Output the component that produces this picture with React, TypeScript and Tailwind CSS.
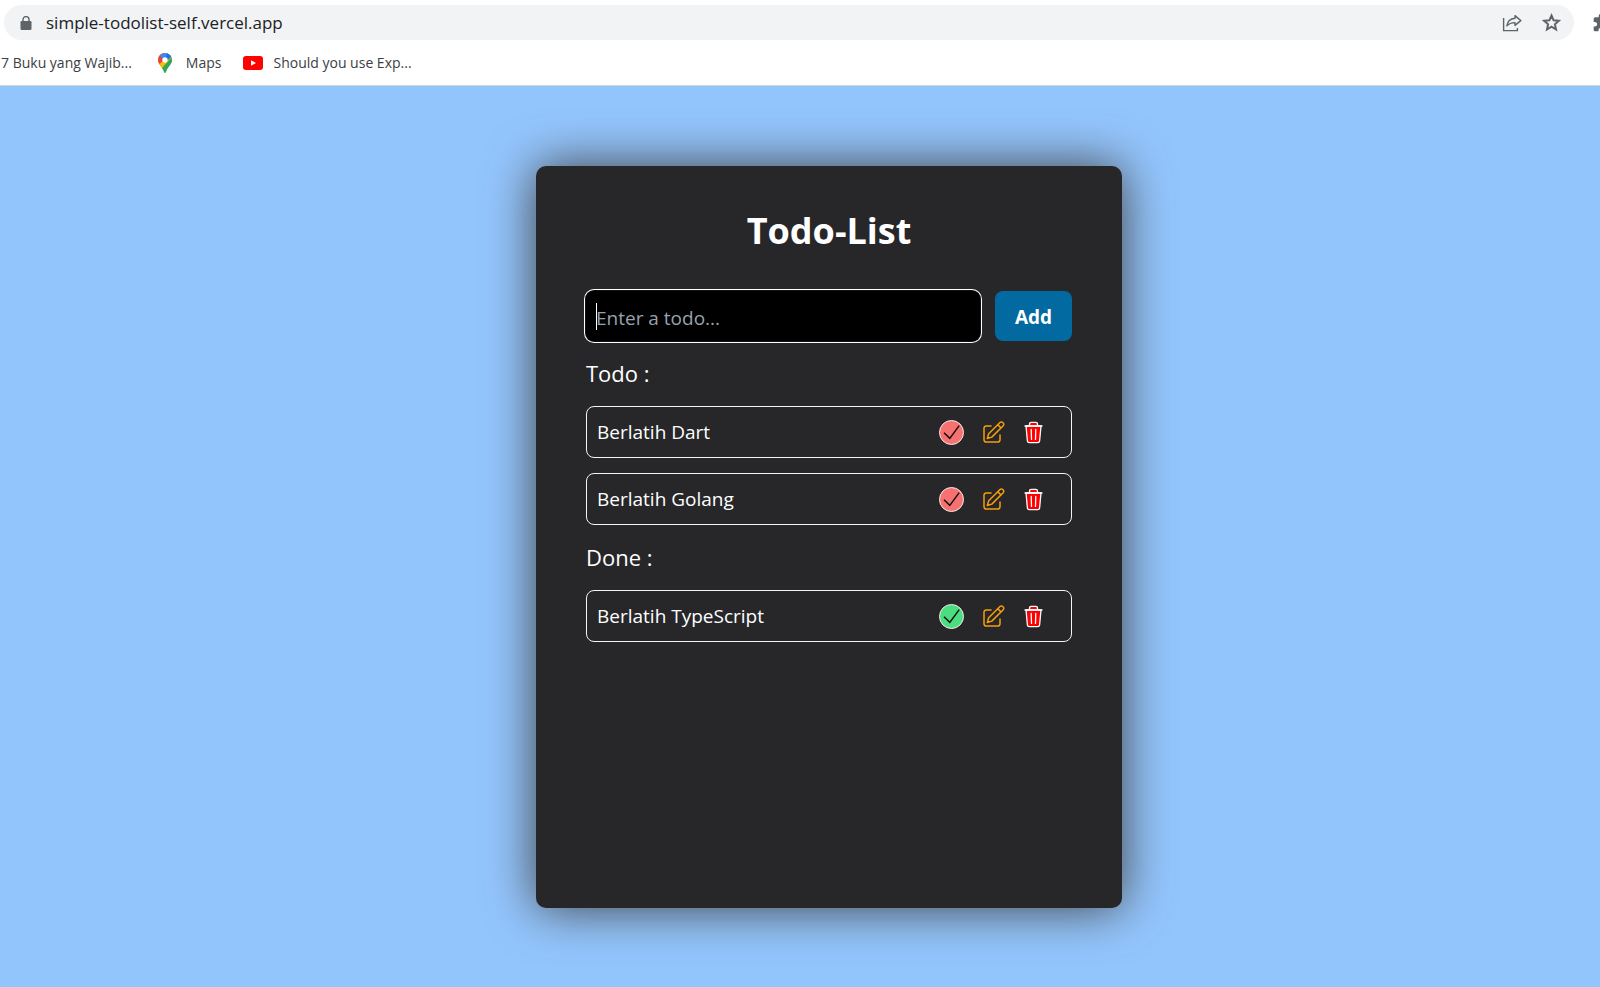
import { useState } from "react";

type Todo = { id: number; text: string; done: boolean };

const initialTodos: Todo[] = [
  { id: 1, text: "Berlatih Dart", done: false },
  { id: 2, text: "Berlatih Golang", done: false },
  { id: 3, text: "Berlatih TypeScript", done: true },
];

function LockIcon() {
  return (
    <svg viewBox="0 0 12 14" className="h-3.5 w-3 shrink-0" aria-hidden="true">
      <rect x="0.5" y="5" width="11" height="9" rx="1.2" fill="#5f6368" />
      <path d="M3 6V3.6a3 3 0 0 1 6 0V6" fill="none" stroke="#5f6368" strokeWidth="1.4" />
    </svg>
  );
}

function ShareIcon() {
  return (
    <svg viewBox="0 0 20 20" className="size-5" fill="none" stroke="#5f6368" strokeWidth="1.4" aria-hidden="true">
      <path d="M1.6 5v12.6h13.8V15" />
      <path d="M13 2.6 18.8 7.6 13 12.4V9.6C9.4 9.5 7 10.6 4.9 12.9 5.4 8.8 8 5.8 13 5.3Z" strokeLinejoin="round" />
    </svg>
  );
}

function StarIcon() {
  return (
    <svg viewBox="0 0 20 20" className="size-5" fill="none" stroke="#5f6368" strokeWidth="2" aria-hidden="true">
      <path d="M9.5 2.5 11.6 7.3 16.8 7.8 12.9 11.3 14 16.5 9.5 13.7 5 16.5 6.100 11.300 2.200 7.800 7.400 7.300Z" />
    </svg>
  );
}

function PuzzleIcon() {
  return (
    <svg viewBox="0 0 24 24" className="size-5 shrink-0" fill="#5f6368" aria-hidden="true">
      <path d="M20.500 11H19V7c0-1.100-.9-2-2-2h-4V3.500a2.500 2.500 0 0 0-5 0V5H4c-1.100 0-2 .9-2 2v3.800h1.500c1.500 0 2.700 1.200 2.700 2.700S5 16.200 3.500 16.200H2V20c0 1.100.9 2 2 2h3.800v-1.500c0-1.500 1.200-2.700 2.700-2.700s2.700 1.200 2.700 2.700V22H17c1.100 0 2-.9 2-2v-4h1.500a2.500 2.500 0 0 0 0-5z" />
    </svg>
  );
}

function MapsIcon() {
  return (
    <svg viewBox="0 0 14 20" className="h-5 w-3.5 shrink-0" aria-hidden="true">
      <defs>
        <clipPath id="pin">
          <path d="M7 0a7 7 0 0 1 7 7c0 4.600-4.600 6.400-6.100 12.200-.2 1-1.600 1-1.800 0C4.600 13.400 0 11.600 0 7a7 7 0 0 1 7-7z" />
        </clipPath>
      </defs>
      <g clipPath="url(#pin)">
        <rect width="14" height="20" fill="#34a853" />
        <path d="M0 0h12L7 7 1.500 13 0 11z" fill="#fbbc04" />
        <path d="M-1 14 12 0 14 4 3.500 16z" fill="#fbbc04" />
        <path d="M14 4 3.500 16 9 20 15 12z" fill="#34a853" />
        <path d="M0 0h7v6L1.600 11 0 9z" fill="#ea4335" />
        <path d="M1.600 2.400 7-1l6 3L7 8.500z" fill="#4285f4" />
        <path d="M9 0 14 3 9 8 7 7z" fill="#1a73e8" />
      </g>
      <circle cx="7" cy="7" r="2.700" fill="#fff" />
    </svg>
  );
}

function YoutubeIcon() {
  return (
    <svg viewBox="0 0 20 14" className="h-3.5 w-5 shrink-0" aria-hidden="true">
      <rect width="20" height="14" rx="3" fill="#f00" />
      <path d="M8 4.200v5.600L13 7z" fill="#fff" />
    </svg>
  );
}

function CheckIcon({ done }: { done: boolean }) {
  return (
    <svg viewBox="0 0 25 25" className="size-[25px]" aria-hidden="true">
      <circle cx="12.500" cy="12.500" r="12" fill={done ? "#4ade80" : "#f87171"} stroke="#f3e8e8" />
      <path d="M5 12.800 10.800 18.400 20.200 5.600" fill="none" stroke="#111" strokeWidth="1.500" />
    </svg>
  );
}

function EditIcon() {
  return (
    <svg
      viewBox="0 0 25 25"
      className="size-[25px]"
      fill="none"
      stroke="#f59e0b"
      strokeWidth="1.500"
      strokeLinecap="round"
      strokeLinejoin="round"
      aria-hidden="true"
    >
      <path d="M11 6H6.200A2.200 2.200 0 0 0 4 8.200v11.600A2.200 2.200 0 0 0 6.200 22h11.600a2.200 2.200 0 0 0 2.200-2.200V15" />
      <path d="M20 2.500a1.900 1.900 0 0 1 2.700 0l.5.500a1.900 1.900 0 0 1 0 2.700L11.800 17.100 7.300 18.500l1.400-4.700ZM17.800 4.800l3.100 3.100" />
    </svg>
  );
}

function TrashIcon() {
  return (
    <svg
      viewBox="0 0 25 25"
      className="size-[25px]"
      fill="#f00"
      stroke="#fff"
      strokeWidth="1.300"
      strokeLinecap="round"
      strokeLinejoin="round"
      aria-hidden="true"
    >
      <path d="M8.500 6V4A1.700 1.700 0 0 1 10.200 2.300h4.600a1.700 1.700 0 0 1 1.700 1.700V6z" />
      <path d="M5 6 6.400 21a1.900 1.900 0 0 0 1.900 1.700h8.400a1.900 1.900 0 0 0 1.900-1.700L20 6z" />
      <path d="M4 6h17M10.200 9.400l.3 10M14.800 9.400l-.3 10" />
    </svg>
  );
}

export default function App() {
  const [todos, setTodos] = useState(initialTodos);
  const [text, setText] = useState("");

  const add = () => {
    if (!text.trim()) return;
    setTodos([...todos, { id: Date.now(), text, done: false }]);
    setText("");
  };
  const toggle = (id: number) =>
    setTodos(todos.map((t) => (t.id === id ? { ...t, done: !t.done } : t)));
  const remove = (id: number) => setTodos(todos.filter((t) => t.id !== id));
  const edit = (todo: Todo) => {
    setText(todo.text);
    remove(todo.id);
  };

  const renderList = (title: string, done: boolean) => (
    <section>
      <h2 className="flex h-[65px] items-center text-[22px]">{title}</h2>
      <ul className="flex flex-col gap-[15px]">
        {todos
          .filter((t) => t.done === done)
          .map((t) => (
            <li
              key={t.id}
              className="flex h-[52px] items-center gap-4 rounded-lg border border-gray-100 pt-0.5 pr-[25px] pl-2.5"
            >
              <span className="min-w-0 flex-1 truncate text-[19px]">{t.text}</span>
              <button type="button" aria-label="Toggle done" onClick={() => toggle(t.id)}>
                <CheckIcon done={t.done} />
              </button>
              <button type="button" aria-label="Edit" onClick={() => edit(t)}>
                <EditIcon />
              </button>
              <button type="button" aria-label="Delete" onClick={() => remove(t.id)}>
                <TrashIcon />
              </button>
            </li>
          ))}
      </ul>
    </section>
  );

  return (
    <div className="flex min-h-screen flex-col overflow-hidden bg-[#93c5fd] font-['Open_Sans','Noto_Sans',sans-serif]">
      <header className="border-b border-gray-300 bg-white">
        <div className="flex items-center gap-[18px] overflow-hidden pt-[5px] pl-1">
          <div className="flex h-[35px] min-w-0 flex-1 items-center rounded-full bg-[#f1f3f4] pr-3 pl-4">
            <LockIcon />
            <span className="min-w-0 flex-1 truncate pl-3.5 text-[17px] text-[#202124]">
              simple-todolist-self.vercel.app
            </span>
            <div className="flex gap-5">
              <button type="button" aria-label="Share">
                <ShareIcon />
              </button>
              <button type="button" aria-label="Bookmark">
                <StarIcon />
              </button>
            </div>
          </div>
          <button type="button" aria-label="Extensions" className="-mr-3">
            <PuzzleIcon />
          </button>
        </div>
        <nav className="flex h-[45px] items-center pl-px text-[14px] text-[#3c4043]">
          <a href="#buku" className="mr-[26px]">7 Buku yang Wajib...</a>
          <a href="#maps" className="mr-[22px] flex items-center gap-3.5">
            <MapsIcon />
            Maps
          </a>
          <a href="#youtube" className="flex items-center gap-2.5">
            <YoutubeIcon />
            Should you use Exp...
          </a>
        </nav>
      </header>

      <main className="flex flex-1 items-center justify-center pl-[58px]">
        <div className="min-h-[742px] w-[586px] max-w-full rounded-[10px] bg-[#27272a] px-[50px] py-10 text-white shadow-[0_0_50px_#404040]">
          <h1 className="mb-[38px] pt-0.5 text-center text-[36px] leading-[45px] font-bold">Todo-List</h1>
          <form
            className="flex gap-[15px]"
            onSubmit={(e) => {
              e.preventDefault();
              add();
            }}
          >
            <div className="relative min-w-0 flex-1">
              <input
                type="text"
                aria-label="Todo"
                value={text}
                onChange={(e) => setText(e.target.value)}
                placeholder="Enter a todo..."
                className="h-[50px] w-full rounded-lg bg-black px-2.5 pt-1 text-[19px] text-white caret-transparent shadow-[0_0_0_1px_#101010,0_0_0_2px_#ffffff] outline-none placeholder:text-gray-400"
              />
              <span className="absolute top-3 left-2.5 h-[27px] w-px bg-white" />
            </div>
            <button
              type="submit"
              className="h-[50px] w-[77px] rounded-lg bg-[#0369a1] pt-1 text-[19px] font-bold"
            >
              Add
            </button>
          </form>
          {renderList("Todo :", false)}
          {renderList("Done :", true)}
        </div>
      </main>
    </div>
  );
}
